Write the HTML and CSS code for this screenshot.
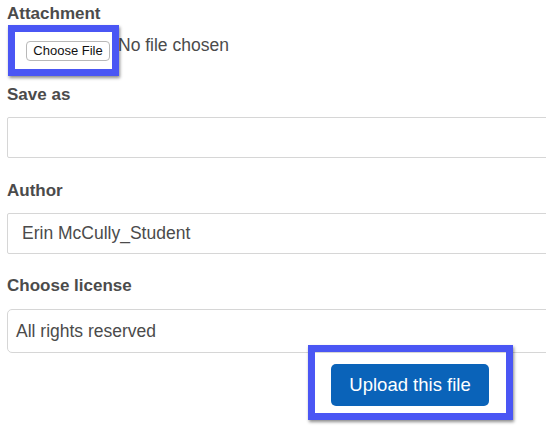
FILE: index.html
```html
<!DOCTYPE html>
<html lang="en">
<head>
<meta charset="utf-8">
<title>Upload file</title>
<link rel="stylesheet" href="styles.css">
</head>
<body>
<div class="page">
  <form class="form">
    <div class="label">Attachment</div>
    <div class="file-row">
      <span class="file-btn">Choose File</span>
      <span class="file-status">No file chosen</span>
    </div>

    <div class="label label-save">Save as</div>
    <div class="field field-text"></div>

    <div class="label label-author">Author</div>
    <div class="field field-text">Erin McCully_Student</div>

    <div class="label label-license">Choose license</div>
    <div class="field field-select">All rights reserved</div>

    <div class="actions">
      <span class="btn-primary">Upload this file</span>
    </div>
  </form>

  <div class="highlight highlight-file"></div>
  <div class="highlight highlight-upload"></div>
</div>
</body>
</html>
```

FILE: styles.css
```css
html, body {
  margin: 0;
  padding: 0;
  background: #ffffff;
}

body {
  width: 546px;
  height: 429px;
  overflow: hidden;
  font-family: "Liberation Sans", Arial, sans-serif;
  color: #4b4b4b;
}

.page {
  position: relative;
  width: 546px;
  height: 429px;
  overflow: hidden;
}

.form {
  padding: 4px 0 0 7px;
  width: 600px;
}

.label {
  font-size: 17px;
  line-height: 20px;
  font-weight: bold;
  color: #4b4b4b;
}

.file-row {
  display: flex;
  align-items: flex-start;
  height: 37px;
}

.file-btn {
  box-sizing: border-box;
  margin: 17px 0 0 19px;
  width: 84px;
  height: 20px;
  border: 1px solid #b8b8b8;
  border-radius: 4px;
  background: #ffffff;
  color: #111111;
  font-size: 13px;
  line-height: 18px;
  text-align: center;
}

.file-status {
  margin: 11px 0 0 8px;
  font-size: 17.5px;
  line-height: 20px;
  color: #4b4b4b;
}

.label-save { margin-top: 24px; }
.label-author { margin-top: 23px; }
.label-license { margin-top: 22px; }

.field {
  box-sizing: border-box;
  width: 600px;
  margin-top: 12px;
  border: 1px solid #d6d6d6;
  font-size: 17.5px;
  color: #4b4b4b;
  background: #ffffff;
}

.field-text {
  height: 41px;
  line-height: 39px;
  padding-left: 14px;
  border-radius: 2px;
}

.field-select {
  margin-top: 13px;
  height: 44px;
  line-height: 42px;
  padding-left: 8px;
  border-radius: 5px;
}

.actions {
  margin-top: 11px;
  padding-left: 324px;
}

.btn-primary {
  display: inline-block;
  box-sizing: border-box;
  width: 158px;
  height: 42px;
  line-height: 42px;
  border-radius: 5px;
  background: #0a63b9;
  color: #ffffff;
  font-size: 18.5px;
  text-align: center;
}

.highlight {
  position: absolute;
  box-sizing: border-box;
  border: 7px solid #4a56f4;
  box-shadow: 1px 2px 3px rgba(0, 0, 0, 0.45);
}

.highlight-file {
  left: 8px;
  top: 25px;
  width: 111px;
  height: 51px;
}

.highlight-upload {
  left: 308px;
  top: 345px;
  width: 205px;
  height: 75px;
}
```
